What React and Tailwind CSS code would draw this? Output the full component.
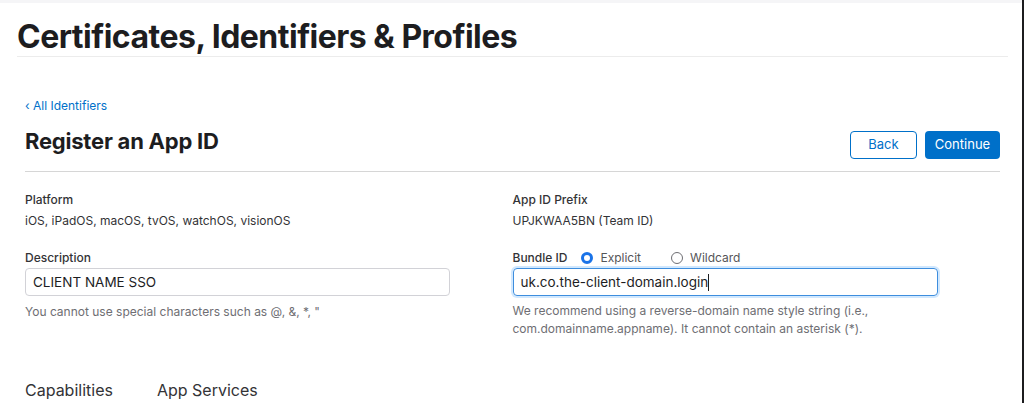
export default function App() {
  const font = { fontFamily: 'Inter, "Noto Sans", sans-serif' };
  return (
    <div className="w-full h-[403px] flex overflow-hidden bg-white text-[#333336]" style={font}>
      <div className="flex-1 flex flex-col">
        <div className="h-[3px] bg-[#f5f5f7]" />
        <div className="ml-[17px] mr-[14px] border-b border-[#ececec] pt-[17px] pb-[2px]">
          <h1 className="text-[32px] leading-[34px] font-bold tracking-[-0.016em] text-[#1d1d1f]">
            Certificates, Identifiers &amp; Profiles
          </h1>
        </div>
        <div className="ml-[25px] mr-[22px] flex flex-col">
          <a className="mt-[41px] text-[12px] leading-[16px] text-[#0070c9]">‹ All Identifiers</a>
          <div className="mt-[12px] flex items-end justify-between border-b border-[#d6d6d6] pb-[12px]">
            <h2 className="text-[22px] leading-[30px] font-bold text-[#1d1d1f] tracking-[-0.01em] mb-[3px]">Register an App ID</h2>
            <div className="flex gap-[8px]">
              <button className="w-[67px] h-[28px] rounded-[4px] border border-[#0070c9] text-[#0070c9] text-[13px] bg-white">Back</button>
              <button className="w-[75px] h-[28px] rounded-[4px] bg-[#0070c9] text-white text-[13px]">Continue</button>
            </div>
          </div>
          <div className="grid grid-cols-2 mt-[20px]">
            <div className="flex flex-col">
              <div className="text-[12px] leading-[16px] font-medium text-[#333336]">Platform</div>
              <div className="mt-[5px] text-[12px] leading-[16px] text-[#333336]">iOS, iPadOS, macOS, tvOS, watchOS, visionOS</div>
              <div className="mt-[21px] text-[12px] leading-[16px] font-medium">Description</div>
              <div className="mt-[2px] w-[425px] h-[28px] rounded-[4px] border border-[#d2d2d7] flex items-center px-[7px] text-[13.5px] text-[#1d1d1f]">
                CLIENT NAME SSO
              </div>
              <div className="mt-[7px] text-[12px] leading-[18px] text-[#6e6e73]">You cannot use special characters such as @, &amp;, *, "</div>
            </div>
            <div className="flex flex-col">
              <div className="text-[12px] leading-[16px] font-medium">App ID Prefix</div>
              <div className="mt-[5px] text-[12px] leading-[16px]">UPJKWAA5BN (Team ID)</div>
              <div className="mt-[20px] flex items-center text-[12px] leading-[18px]">
                <span className="font-medium">Bundle ID</span>
                <span className="ml-[14px] w-[12px] h-[12px] rounded-full border-[3.5px] border-[#1a73e8] bg-white" />
                <span className="ml-[7px] text-[#555558]">Explicit</span>
                <span className="ml-[30px] w-[12px] h-[12px] rounded-full border border-[#6e6e73] bg-white" />
                <span className="ml-[7px] text-[#555558]">Wildcard</span>
              </div>
              <div className="mt-[1px] w-[425px] h-[28px] rounded-[4px] border border-[#3e8ede] shadow-[0_0_0_2px_rgba(0,125,250,0.18)] flex items-center px-[7px] text-[13.5px] text-[#1d1d1f]">
                uk.co.the-client-domain.login<span className="w-[1px] h-[17px] bg-[#1d1d1f]" />
              </div>
              <div className="mt-[6px] text-[12px] leading-[18px] text-[#6e6e73]">
                We recommend using a reverse-domain name style string (i.e.,<br />com.domainname.appname). It cannot contain an asterisk (*).
              </div>
            </div>
          </div>
          <div className="mt-[42px] flex text-[16px] leading-[20px] text-[#333336]">
            <span>Capabilities</span>
            <span className="ml-[44px]">App Services</span>
          </div>
        </div>
      </div>
      <div className="w-[2px] bg-[#1c1c1e]" />
    </div>
  );
}
